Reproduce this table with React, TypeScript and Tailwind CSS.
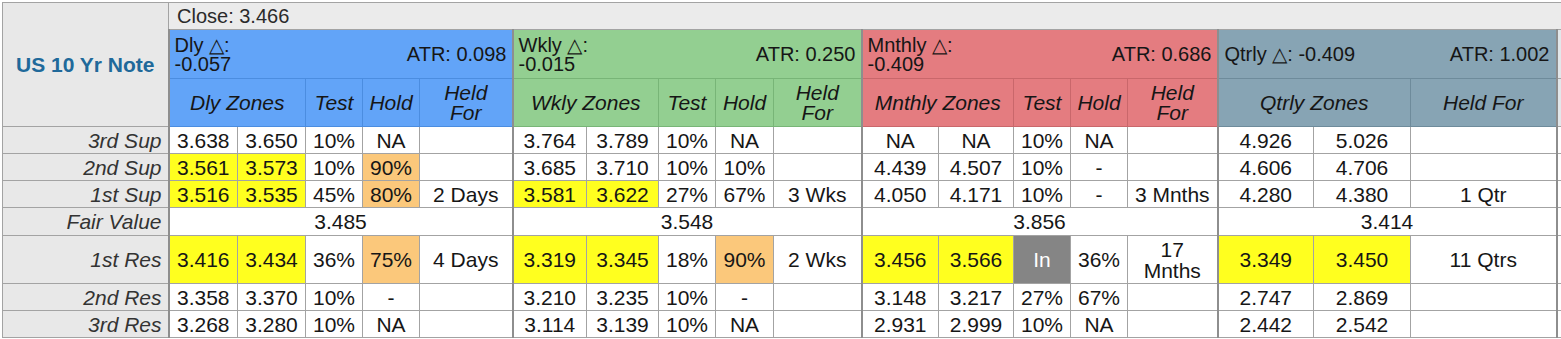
import React from "react";

// --- DATA ---
type Mark = "y" | "o" | "g" | undefined;
type Cell = { v: string; m?: Mark };

const c = (v: string, m?: Mark): Cell => ({ v, m });

const groups = [
  {
    key: "dly",
    title: "Dly △:",
    delta: "-0.057",
    atr: "ATR: 0.098",
    zones: "Dly Zones",
    bg: "bg-[#62a4f8]",
    line: "border-[#4b8de0]",
    fair: "3.485",
  },
  {
    key: "wkly",
    title: "Wkly △:",
    delta: "-0.015",
    atr: "ATR: 0.250",
    zones: "Wkly Zones",
    bg: "bg-[#93cf91]",
    line: "border-[#78b577]",
    fair: "3.548",
  },
  {
    key: "mnthly",
    title: "Mnthly △:",
    delta: "-0.409",
    atr: "ATR: 0.686",
    zones: "Mnthly Zones",
    bg: "bg-[#e47c80]",
    line: "border-[#c9676b]",
    fair: "3.856",
  },
];

const rows: {
  label: string;
  tall?: boolean;
  dly: Cell[];
  wkly: Cell[];
  mnthly: Cell[];
  qtrly: Cell[];
}[] = [
  {
    label: "3rd Sup",
    dly: [c("3.638"), c("3.650"), c("10%"), c("NA"), c("")],
    wkly: [c("3.764"), c("3.789"), c("10%"), c("NA"), c("")],
    mnthly: [c("NA"), c("NA"), c("10%"), c("NA"), c("")],
    qtrly: [c("4.926"), c("5.026"), c("")],
  },
  {
    label: "2nd Sup",
    dly: [c("3.561", "y"), c("3.573", "y"), c("10%"), c("90%", "o"), c("")],
    wkly: [c("3.685"), c("3.710"), c("10%"), c("10%"), c("")],
    mnthly: [c("4.439"), c("4.507"), c("10%"), c("-"), c("")],
    qtrly: [c("4.606"), c("4.706"), c("")],
  },
  {
    label: "1st Sup",
    dly: [c("3.516", "y"), c("3.535", "y"), c("45%"), c("80%", "o"), c("2 Days")],
    wkly: [c("3.581", "y"), c("3.622", "y"), c("27%"), c("67%"), c("3 Wks")],
    mnthly: [c("4.050"), c("4.171"), c("10%"), c("-"), c("3 Mnths")],
    qtrly: [c("4.280"), c("4.380"), c("1 Qtr")],
  },
  {
    label: "1st Res",
    tall: true,
    dly: [c("3.416", "y"), c("3.434", "y"), c("36%"), c("75%", "o"), c("4 Days")],
    wkly: [c("3.319", "y"), c("3.345", "y"), c("18%"), c("90%", "o"), c("2 Wks")],
    mnthly: [c("3.456", "y"), c("3.566", "y"), c("In", "g"), c("36%"), c("17\nMnths")],
    qtrly: [c("3.349", "y"), c("3.450", "y"), c("11 Qtrs")],
  },
  {
    label: "2nd Res",
    dly: [c("3.358"), c("3.370"), c("10%"), c("-"), c("")],
    wkly: [c("3.210"), c("3.235"), c("10%"), c("-"), c("")],
    mnthly: [c("3.148"), c("3.217"), c("27%"), c("67%"), c("")],
    qtrly: [c("2.747"), c("2.869"), c("")],
  },
  {
    label: "3rd Res",
    dly: [c("3.268"), c("3.280"), c("10%"), c("NA"), c("")],
    wkly: [c("3.114"), c("3.139"), c("10%"), c("NA"), c("")],
    mnthly: [c("2.931"), c("2.999"), c("10%"), c("NA"), c("")],
    qtrly: [c("2.442"), c("2.542"), c("")],
  },
];

const markBg = (m: Mark) =>
  m === "y"
    ? "bg-[#ffff1f]"
    : m === "o"
      ? "bg-[#fbc87b]"
      : m === "g"
        ? "bg-[#858585] text-white"
        : "bg-white";

const DataCells = ({ cells }: { cells: Cell[] }) => (
  <>
    {cells.map((cell, i) => (
      <td
        key={i}
        className={`${markBg(cell.m)} border border-[#a3a3a3] text-center leading-[21px] whitespace-pre-line ${
          i === 0 ? "border-l-2 border-l-[#8e8e8e]" : ""
        }`}
      >
        {cell.v}
      </td>
    ))}
  </>
);

const LabelCell = ({ text }: { text: string }) => (
  <td className="bg-[#e8e8e8] border border-[#a3a3a3] text-right italic text-[#333] pr-[6px]">
    {text}
  </td>
);

const FairRow = () => (
  <tr className="h-[28px]">
    <LabelCell text="Fair Value" />
    {groups.map((g) => (
      <td
        key={g.key}
        colSpan={5}
        className="bg-white border border-[#a3a3a3] border-l-2 border-l-[#8e8e8e] text-center"
      >
        {g.fair}
      </td>
    ))}
    <td colSpan={3} className="bg-white border border-[#a3a3a3] border-l-2 border-l-[#8e8e8e] text-center">
      3.414
    </td>
    <td className="bg-white border border-[#a3a3a3] border-l-2 border-l-[#8e8e8e]" />
  </tr>
);

export default function App() {
  const top = rows.slice(0, 3);
  const bottom = rows.slice(3);

  const renderRow = (r: (typeof rows)[number]) => (
    <tr key={r.label} className={r.tall ? "h-[48px]" : "h-[27px]"}>
      <LabelCell text={r.label} />
      <DataCells cells={r.dly} />
      <DataCells cells={r.wkly} />
      <DataCells cells={r.mnthly} />
      <DataCells cells={r.qtrly} />
      <td className="bg-white border border-[#a3a3a3] border-l-2 border-l-[#8e8e8e]" />
    </tr>
  );

  return (
    <div className="w-[1561px] h-[339px] bg-white pt-[2px] pl-[2px] overflow-hidden font-['Liberation_Sans',Arial,sans-serif] text-[21px] leading-[21px] text-[#161616] [&_td]:py-0 [&_th]:py-0">
      <table className="table-fixed border-collapse w-[1559px]">
        <colgroup>
          <col className="w-[166px]" />
          {/* Dly */}
          <col className="w-[69px]" />
          <col className="w-[68px]" />
          <col className="w-[57px]" />
          <col className="w-[57px]" />
          <col className="w-[93px]" />
          {/* Wkly */}
          <col className="w-[74px]" />
          <col className="w-[72px]" />
          <col className="w-[57px]" />
          <col className="w-[58px]" />
          <col className="w-[88px]" />
          {/* Mnthly */}
          <col className="w-[77px]" />
          <col className="w-[75px]" />
          <col className="w-[57px]" />
          <col className="w-[57px]" />
          <col className="w-[90px]" />
          {/* Qtrly */}
          <col className="w-[96px]" />
          <col className="w-[97px]" />
          <col className="w-[146px]" />
          <col className="w-[5px]" />
        </colgroup>
        <thead>
          <tr className="h-[27px]">
            <th
              rowSpan={3}
              className="bg-[#e8e8e8] border border-[#a3a3a3] text-[21px] font-bold text-[#20699a] text-center"
            >
              US 10 Yr Note
            </th>
            <th
              colSpan={19}
              className="bg-[#ebebeb] border border-[#a3a3a3] text-left font-normal text-[20px] text-[#2a2a2a] pl-[8px]"
            >
              Close: 3.466
            </th>
          </tr>
          <tr className="h-[49px] font-normal">
            {groups.map((g) => (
              <th
                key={g.key}
                colSpan={5}
                className={`${g.bg} border ${g.line} border-l-2 border-l-[#8e8e8e] font-normal px-[5px] text-[20px]`}
              >
                <div className="flex items-center justify-between">
                  <div className="text-left leading-[19px] pt-[2px]">
                    <div>{g.title}</div>
                    <div>{g.delta}</div>
                  </div>
                  <div>{g.atr}</div>
                </div>
              </th>
            ))}
            <th
              colSpan={3}
              className="bg-[#87a4b4] border border-[#6e8b9b] border-l-2 border-l-[#8e8e8e] font-normal px-[6px] text-[20px]"
            >
              <div className="flex items-center justify-between">
                <span>Qtrly △: -0.409</span>
                <span>ATR: 1.002</span>
              </div>
            </th>
            <th className="bg-[#e2e7ea] border border-[#a3a3a3] border-l-2 border-l-[#8e8e8e]" />
          </tr>
          <tr className="h-[48px] italic">
            {groups.map((g) => (
              <React.Fragment key={g.key}>
                <th
                  colSpan={2}
                  className={`${g.bg} border ${g.line} border-l-2 border-l-[#8e8e8e] font-normal`}
                >
                  {g.zones}
                </th>
                <th className={`${g.bg} border ${g.line} font-normal`}>Test</th>
                <th className={`${g.bg} border ${g.line} font-normal`}>Hold</th>
                <th className={`${g.bg} border ${g.line} font-normal leading-[20px]`}>
                  Held
                  <br />
                  For
                </th>
              </React.Fragment>
            ))}
            <th
              colSpan={2}
              className="bg-[#87a4b4] border border-[#6e8b9b] border-l-2 border-l-[#8e8e8e] font-normal"
            >
              Qtrly Zones
            </th>
            <th className="bg-[#87a4b4] border border-[#6e8b9b] font-normal">Held For</th>
            <th className="bg-[#e2e7ea] border border-[#a3a3a3] border-l-2 border-l-[#8e8e8e]" />
          </tr>
        </thead>
        <tbody>
          {top.map(renderRow)}
          <FairRow />
          {bottom.map(renderRow)}
        </tbody>
      </table>
    </div>
  );
}
